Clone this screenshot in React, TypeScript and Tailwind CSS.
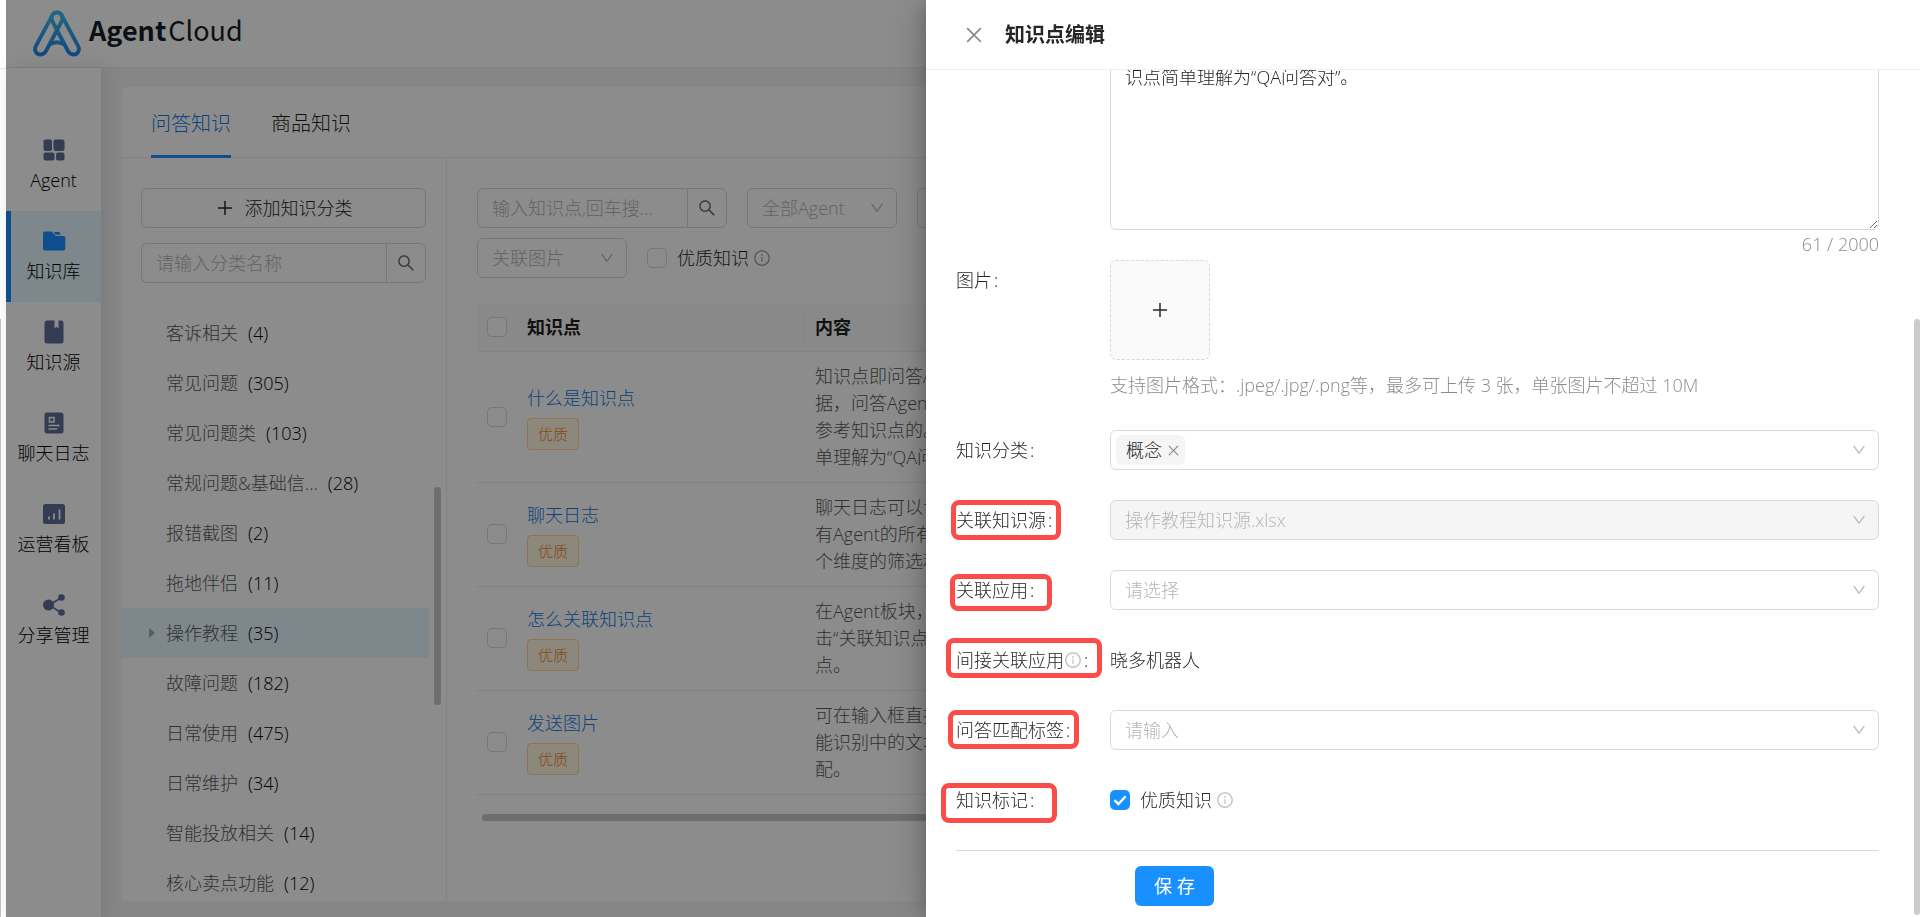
import type { ReactNode } from "react";
import {
  AiFillCaretRight,
  AiOutlineClose,
  AiOutlineDown,
  AiOutlineInfoCircle,
  AiOutlinePlus,
  AiOutlineSearch,
} from "react-icons/ai";

const menu = [
  { label: "Agent", icon: <AgentIcon /> },
  { label: "知识库", icon: <FolderIcon />, active: true },
  { label: "知识源", icon: <BookIcon /> },
  { label: "聊天日志", icon: <LogIcon /> },
  { label: "运营看板", icon: <BoardIcon /> },
  { label: "分享管理", icon: <ShareIcon /> },
];

const categories = [
  { name: "客诉相关", count: 4 },
  { name: "常见问题", count: 305 },
  { name: "常见问题类", count: 103 },
  { name: "常规问题&基础信...", count: 28 },
  { name: "报错截图", count: 2 },
  { name: "拖地伴侣", count: 11 },
  { name: "操作教程", count: 35, active: true },
  { name: "故障问题", count: 182 },
  { name: "日常使用", count: 475 },
  { name: "日常维护", count: 34 },
  { name: "智能投放相关", count: 14 },
  { name: "核心卖点功能", count: 12 },
];

const points = [
  {
    title: "什么是知识点",
    lines: ["知识点即问答A", "据，问答Agent", "参考知识点的。", "单理解为“QA问"],
  },
  {
    title: "聊天日志",
    lines: ["聊天日志可以记", "有Agent的所有", "个维度的筛选和"],
  },
  {
    title: "怎么关联知识点",
    lines: ["在Agent板块，", "击“关联知识点", "点。"],
  },
  {
    title: "发送图片",
    lines: ["可在输入框直接", "能识别中的文本", "配。"],
  },
];

const answer =
  "知识点即问答Agent的数据，问答Agent回答时是参考知识点的。可将知\n识点简单理解为“QA问答对”。";

function AgentIcon() {
  return (
    <svg width="22" height="22" viewBox="0 0 22 22" fill="currentColor">
      <rect x="0.5" y="0.5" width="8.5" height="11.5" rx="2" />
      <rect x="10.5" y="0.5" width="11" height="11.5" rx="2" />
      <rect x="0.5" y="13.5" width="11" height="8" rx="2" />
      <rect x="13" y="13.5" width="8.5" height="8" rx="2" />
    </svg>
  );
}

function FolderIcon() {
  return (
    <svg width="24" height="22" viewBox="0 0 24 22" fill="currentColor">
      <path d="M3 1.5h6.5L14 6h7.5A1.8 1.8 0 0 1 23.3 7.8V18.5A2 2 0 0 1 21.3 20.5H3A2 2 0 0 1 1 18.5V3.5A2 2 0 0 1 3 1.5z" />
      <path d="M11.5 2h6l1.2 2.7h-5z" />
    </svg>
  );
}

function BookIcon() {
  return (
    <svg width="20" height="24" viewBox="0 0 20 24">
      <rect x="0.5" y="0.5" width="19" height="23" rx="2.5" fill="currentColor" />
      <path d="M10.5 0h4v8.5l-2-1.8-2 1.8z" fill="#fff" />
    </svg>
  );
}

function LogIcon() {
  return (
    <svg width="20" height="22" viewBox="0 0 20 22" fill="none" stroke="#fff" strokeWidth="1.5">
      <rect x="0.5" y="0.5" width="19" height="21" rx="2.5" fill="currentColor" stroke="none" />
      <rect x="5.5" y="5.5" width="4.5" height="4.5" />
      <path d="M4.5 13.5h11M4.5 17h8.5" />
    </svg>
  );
}

function BoardIcon() {
  return (
    <svg width="22" height="20" viewBox="0 0 22 20">
      <rect width="22" height="20" rx="2.5" fill="currentColor" />
      <path d="M6 12.500v3M11 9.500v6M16.500 5.500v10" stroke="#fff" strokeWidth="1.8" />
    </svg>
  );
}

function ShareIcon() {
  return (
    <svg width="24" height="22" viewBox="0 0 24 22">
      <path d="M7 11l12-7M7 11l12 7.5" stroke="currentColor" strokeWidth="1.5" />
      <g fill="currentColor">
        <circle cx="6.5" cy="11" r="5.5" />
        <circle cx="19.5" cy="3.5" r="3.3" />
        <circle cx="19.5" cy="18.5" r="3.3" />
      </g>
    </svg>
  );
}

function Logo() {
  return (
    <div className="flex items-start gap-2">
      <svg width="48" height="47" viewBox="0 0 48 47" fill="none" stroke="url(#logo)" strokeWidth="3.8" strokeLinejoin="round">
        <defs>
          <linearGradient id="logo" x1="0" y1="0" x2="0" y2="47" gradientUnits="userSpaceOnUse">
            <stop offset="0" stopColor="#3fc0ee" />
            <stop offset="1" stopColor="#1d83ea" />
          </linearGradient>
        </defs>
        <path d="M19.3 5.5 2.8 36.2C0.5 41 4 44.5 7.5 44.5c3 0 4.700-1.600 5.800-4L28.500 11.500C31 6.500 28 2.300 24 2.300c-2 0-3.700 1-4.700 3.200z" />
        <path d="M28.7 5.5 45.2 36.2c2.3 4.8-1.2 8.3-4.7 8.3-3 0-4.700-1.600-5.800-4L19.500 11.500C17 6.500 20 2.300 24 2.300c2 0 3.700 1 4.700 3.200z" />
        <path d="M16.500 34.500Q24 30 31.500 34.500" />
      </svg>
      <span className="font-['Noto_Sans_CJK_SC',sans-serif] text-[27px] leading-10 text-[#171c26]">
        <b className="font-bold">Agent</b>
        <span className="ml-0.5 font-normal">Cloud</span>
      </span>
    </div>
  );
}

function SearchBox({ id, placeholder }: { id: string; placeholder: string }) {
  return (
    <div className="flex h-10 w-full">
      <input
        id={id}
        aria-label={placeholder}
        placeholder={placeholder}
        className="min-w-0 flex-1 rounded-l-md border border-r-0 border-[#d9d9d9] bg-white px-3.5 placeholder:text-[#b5b5b5]"
      />
      <button
        aria-label="搜索"
        className="flex w-10 items-center justify-center rounded-r-md border border-[#d9d9d9] bg-white text-[#6b6b6b]"
      >
        <AiOutlineSearch size={20} />
      </button>
    </div>
  );
}

type SelectProps = { id: string; value: string; label?: string; disabled?: boolean };

function Select({ id, value, label, disabled }: SelectProps) {
  return (
    <div className="relative w-full">
      <select
        id={id}
        aria-label={label}
        disabled={disabled}
        className="h-10 w-full appearance-none rounded-md border border-[#d9d9d9] bg-white px-3.5 text-[#b5b5b5] opacity-100 disabled:bg-[#f5f5f5]"
      >
        <option>{value}</option>
      </select>
      <AiOutlineDown size={16} className="pointer-events-none absolute top-3 right-3 text-[#b8b8b8]" />
    </div>
  );
}

function Checkbox({ id, label }: { id: string; label?: string }) {
  return (
    <input
      id={id}
      type="checkbox"
      aria-label={label}
      className="block size-5 shrink-0 appearance-none rounded-[5px] border border-[#d9d9d9] bg-white"
    />
  );
}

// Red frame drawn around a form label
function Mark({ className }: { className: string }) {
  return <span className={`pointer-events-none absolute rounded-lg border-5 border-[#fa4d4a] ${className}`} />;
}

type FieldProps = { label: ReactNode; htmlFor?: string; mark?: string; children: ReactNode };

function Field({ label, htmlFor, mark, children }: FieldProps) {
  return (
    <div className="flex">
      <div className="relative h-10 w-[154px] shrink-0">
        <label htmlFor={htmlFor} className="flex h-full items-center">
          {label}
          <span className="ml-0.5">:</span>
        </label>
        {mark && <Mark className={mark} />}
      </div>
      <div className="flex min-h-10 min-w-0 flex-1 items-center">{children}</div>
    </div>
  );
}

function Sidebar() {
  return (
    <nav className="z-10 w-[95px] shrink-0 bg-white pt-[52px] shadow-[4px_0_20px_rgba(0,40,90,0.12)]">
      {menu.map((item) => (
        <a
          key={item.label}
          href="#"
          className={`flex h-[91px] flex-col items-center border-l-5 pt-[18px] pr-[5px] text-black ${
            item.active ? "border-[#1890ff] bg-[#e6f7ff]" : "border-transparent"
          }`}
        >
          <span className={`flex h-6 items-center ${item.active ? "text-[#1890ff]" : "text-[#5f6d97]"}`}>
            {item.icon}
          </span>
          <span className="mt-1 whitespace-nowrap">{item.label}</span>
        </a>
      ))}
    </nav>
  );
}

function CategoryPanel() {
  return (
    <section className="relative w-[326px] shrink-0 border-r border-[#ebebeb] pt-[30px]">
      <div className="flex flex-col gap-[15px] px-5">
        <button className="flex h-10 items-center justify-center gap-2.5 rounded-md border border-[#d9d9d9] text-[#262626]">
          <AiOutlinePlus size={20} />
          添加知识分类
        </button>
        <SearchBox id="category-search" placeholder="请输入分类名称" />
      </div>
      <ul className="mt-[25px] mr-[17px]">
        {categories.map((item) => (
          <li
            key={item.name}
            className={`flex h-[50px] items-center ${item.active ? "bg-[#e6f7ff]" : ""}`}
          >
            <span className="flex w-[45px] justify-center pl-4 text-[#a6a6a6]">
              {item.active && <AiFillCaretRight size={14} />}
            </span>
            <span className="text-[#595959]">{item.name}</span>
            <span className="ml-2.5 text-black">({item.count})</span>
          </li>
        ))}
      </ul>
      <div className="absolute top-[329px] right-[5px] h-[218px] w-[7px] rounded-full bg-[#c9c9c9]" />
    </section>
  );
}

function PointPanel() {
  return (
    <section className="min-w-0 flex-1 pt-[30px] pr-5 pl-[30px]">
      <div className="flex gap-5">
        <div className="w-[250px]">
          <SearchBox id="point-search" placeholder="输入知识点,回车搜..." />
        </div>
        <div className="w-[150px]">
          <Select id="agent" label="Agent" value="全部Agent" />
        </div>
        <div className="w-[150px]">
          <Select id="status" label="状态" value="" />
        </div>
      </div>
      <div className="mt-2.5 flex gap-5">
        <div className="w-[150px]">
          <Select id="image" label="关联图片" value="关联图片" />
        </div>
        <div className="flex items-center gap-2.5">
          <Checkbox id="good" />
          <label htmlFor="good" className="flex items-center gap-1 text-[#1f1f1f]">
            优质知识
            <AiOutlineInfoCircle size={18} className="text-[#999]" />
          </label>
        </div>
      </div>

      <table className="mt-[25px] w-full table-fixed text-left">
        <thead>
          <tr className="h-12 border-b border-[#f0f0f0] bg-[#fafafa] text-[#1f1f1f]">
            <th className="w-10 pl-2.5">
              <Checkbox id="all" label="全选" />
            </th>
            <th className="w-[288px] pl-2.5 font-bold">
              <div className="flex h-7 items-center border-r border-[#f0f0f0]">知识点</div>
            </th>
            <th className="pl-2.5 font-bold">内容</th>
          </tr>
        </thead>
        <tbody>
          {points.map((point, index) => (
            <tr
              key={point.title}
              className={`border-b border-[#ebebeb] ${index === 0 ? "h-[131px]" : "h-[104px]"}`}
            >
              <td className="pl-2.5">
                <Checkbox id={`point-${index}`} label={point.title} />
              </td>
              <td className="pl-2.5">
                <a href="#" className="block text-[#1677e0]">
                  {point.title}
                </a>
                <span className="mt-1.5 inline-flex h-8 items-center rounded-sm border border-[#ffd591] bg-[#fff7e0] px-2.5 align-top text-[15px] text-[#f5822a]">
                  优质
                </span>
              </td>
              <td className="pl-2.5 leading-[27px] text-[#595959]">
                {point.lines.map((line) => (
                  <div key={line} className="whitespace-nowrap">
                    {line}
                  </div>
                ))}
              </td>
            </tr>
          ))}
        </tbody>
      </table>
      <div className="mt-[19px] ml-[5px] h-[7px] rounded-full bg-[#c9c9c9]" />
    </section>
  );
}

function EditDrawer() {
  return (
    <aside className="fixed inset-y-0 right-0 z-30 flex w-[994px] max-w-full flex-col bg-white text-[#262626] shadow-[-6px_0_16px_-4px_rgba(0,0,0,0.2),-9px_0_36px_rgba(0,0,0,0.14)]">
      <header className="flex h-[70px] shrink-0 items-center gap-5 border-b border-[#f0f0f0] pl-[37px]">
        <button aria-label="关闭" className="text-[#8c8c8c]">
          <AiOutlineClose size={22} />
        </button>
        <h2 className="text-xl font-bold">知识点编辑</h2>
      </header>

      <div className="relative min-h-0 flex-1 overflow-hidden">
        <form className="-mt-[41px] pr-[41px] pl-[30px]">
          <div className="ml-[154px]">
            <textarea
              aria-label="内容"
              defaultValue={answer}
              className="block h-[201px] w-full resize-y rounded-md border border-[#d9d9d9] px-3.5 py-[5px]"
            />
            <div className="text-right text-[#8c8c8c]">61 / 2000</div>
          </div>

          <div className="mt-0.5 flex">
            <label htmlFor="upload" className="flex h-10 w-[154px] shrink-0 items-center">
              图片
              <span className="ml-0.5">:</span>
            </label>
            <div>
              <button
                id="upload"
                type="button"
                aria-label="上传图片"
                className="flex size-[100px] items-center justify-center rounded-md border border-dashed border-[#d9d9d9] bg-[#fafafa]"
              >
                <AiOutlinePlus size={20} />
              </button>
              <p className="mt-[11px] text-[#8c8c8c]">
                支持图片格式：.jpeg/.jpg/.png等，最多可上传 3 张，单张图片不超过 10M
              </p>
            </div>
          </div>

          <div className="mt-[31px] flex flex-col gap-[30px]">
            <Field label="知识分类" htmlFor="category">
              <div className="relative flex h-10 w-full items-center rounded-md border border-[#d9d9d9] px-[5px]">
                <span className="flex h-[30px] shrink-0 items-center gap-1 rounded-md bg-[#f5f5f5] pr-1 pl-2.5">
                  概念
                  <button type="button" aria-label="移除概念" className="text-[#8c8c8c]">
                    <AiOutlineClose size={15} />
                  </button>
                </span>
                <input id="category" role="combobox" aria-expanded="false" className="min-w-0 flex-1" />
                <AiOutlineDown size={16} className="mr-1.5 text-[#b8b8b8]" />
              </div>
            </Field>
            <Field label="关联知识源" htmlFor="source" mark="-left-[5px] top-0 h-10 w-[110px]">
              <Select id="source" value="操作教程知识源.xlsx" disabled />
            </Field>
            <Field label="关联应用" htmlFor="app" mark="-left-1.5 top-1 h-[37px] w-[102px]">
              <Select id="app" value="请选择" />
            </Field>
            <Field
              label={
                <>
                  间接关联应用
                  <AiOutlineInfoCircle size={18} className="text-[#bfbfbf]" />
                </>
              }
              mark="-left-2.5 -top-0.5 h-10 w-[156px]"
            >
              晓多机器人
            </Field>
            <Field label="问答匹配标签" htmlFor="tags" mark="-left-2 top-0 h-[39px] w-[131px]">
              <Select id="tags" value="请输入" />
            </Field>
            <Field label="知识标记" mark="-left-[15px] top-[3px] h-10 w-[116px]">
              <span className="relative flex">
                <input
                  id="quality"
                  type="checkbox"
                  defaultChecked
                  className="size-5 appearance-none rounded-[5px] bg-[#1890ff]"
                />
                <svg
                  viewBox="0 0 20 20"
                  className="pointer-events-none absolute inset-0 size-5"
                  fill="none"
                  stroke="#fff"
                  strokeWidth="2.4"
                >
                  <path d="M4.5 10.2l3.9 3.9 7.3-7.8" />
                </svg>
              </span>
              <label htmlFor="quality" className="ml-2.5 flex items-center gap-1">
                优质知识
                <AiOutlineInfoCircle size={18} className="text-[#bfbfbf]" />
              </label>
            </Field>
          </div>

          <div className="mt-[30px] border-t border-[#d9d9d9] pt-[15px] pl-[179px]">
            <button type="button" className="h-10 rounded-md bg-[#1890ff] px-[19px] font-normal text-white">
              保 存
            </button>
          </div>
        </form>
        <div className="absolute top-[249px] right-0 bottom-0.5 w-1.5 rounded-full bg-[#cbcbcb]" />
      </div>
    </aside>
  );
}

export default function App() {
  return (
    <div className="flex h-screen overflow-hidden bg-white font-['Open_Sans','Noto_Sans_CJK_SC',sans-serif] text-[18px] leading-7 font-light">
      <div className="flex w-1.5 shrink-0 flex-col">
        <div className="h-[69px] border-b border-[#ececec]" />
        <div className="mt-[250px] w-px flex-1 bg-[#c4c4c4]" />
      </div>

      <div className="flex min-w-0 flex-1 flex-col bg-[#f5f5f5]">
        <header className="flex h-[68px] shrink-0 items-center border-b border-[#ebebeb] bg-white pl-[27px]">
          <Logo />
        </header>
        <div className="flex min-h-0 flex-1">
          <Sidebar />
          <main className="mx-5 mt-[19px] mb-4 flex min-w-0 flex-1 flex-col overflow-hidden rounded-md bg-white">
            <div className="flex h-[71px] shrink-0 items-stretch gap-10 border-b border-[#ebebeb] px-[30px] text-xl">
              <button className="-mb-px border-b-3 border-[#1890ff] pt-1.5 text-[#1677e0]">问答知识</button>
              <button className="-mb-px border-b-3 border-transparent pt-1.5 text-[#1f1f1f]">商品知识</button>
            </div>
            <div className="flex min-h-0 flex-1">
              <CategoryPanel />
              <PointPanel />
            </div>
          </main>
        </div>
      </div>

      <div className="fixed inset-y-0 right-0 left-1.5 z-20 bg-black/45" />
      <EditDrawer />
    </div>
  );
}
